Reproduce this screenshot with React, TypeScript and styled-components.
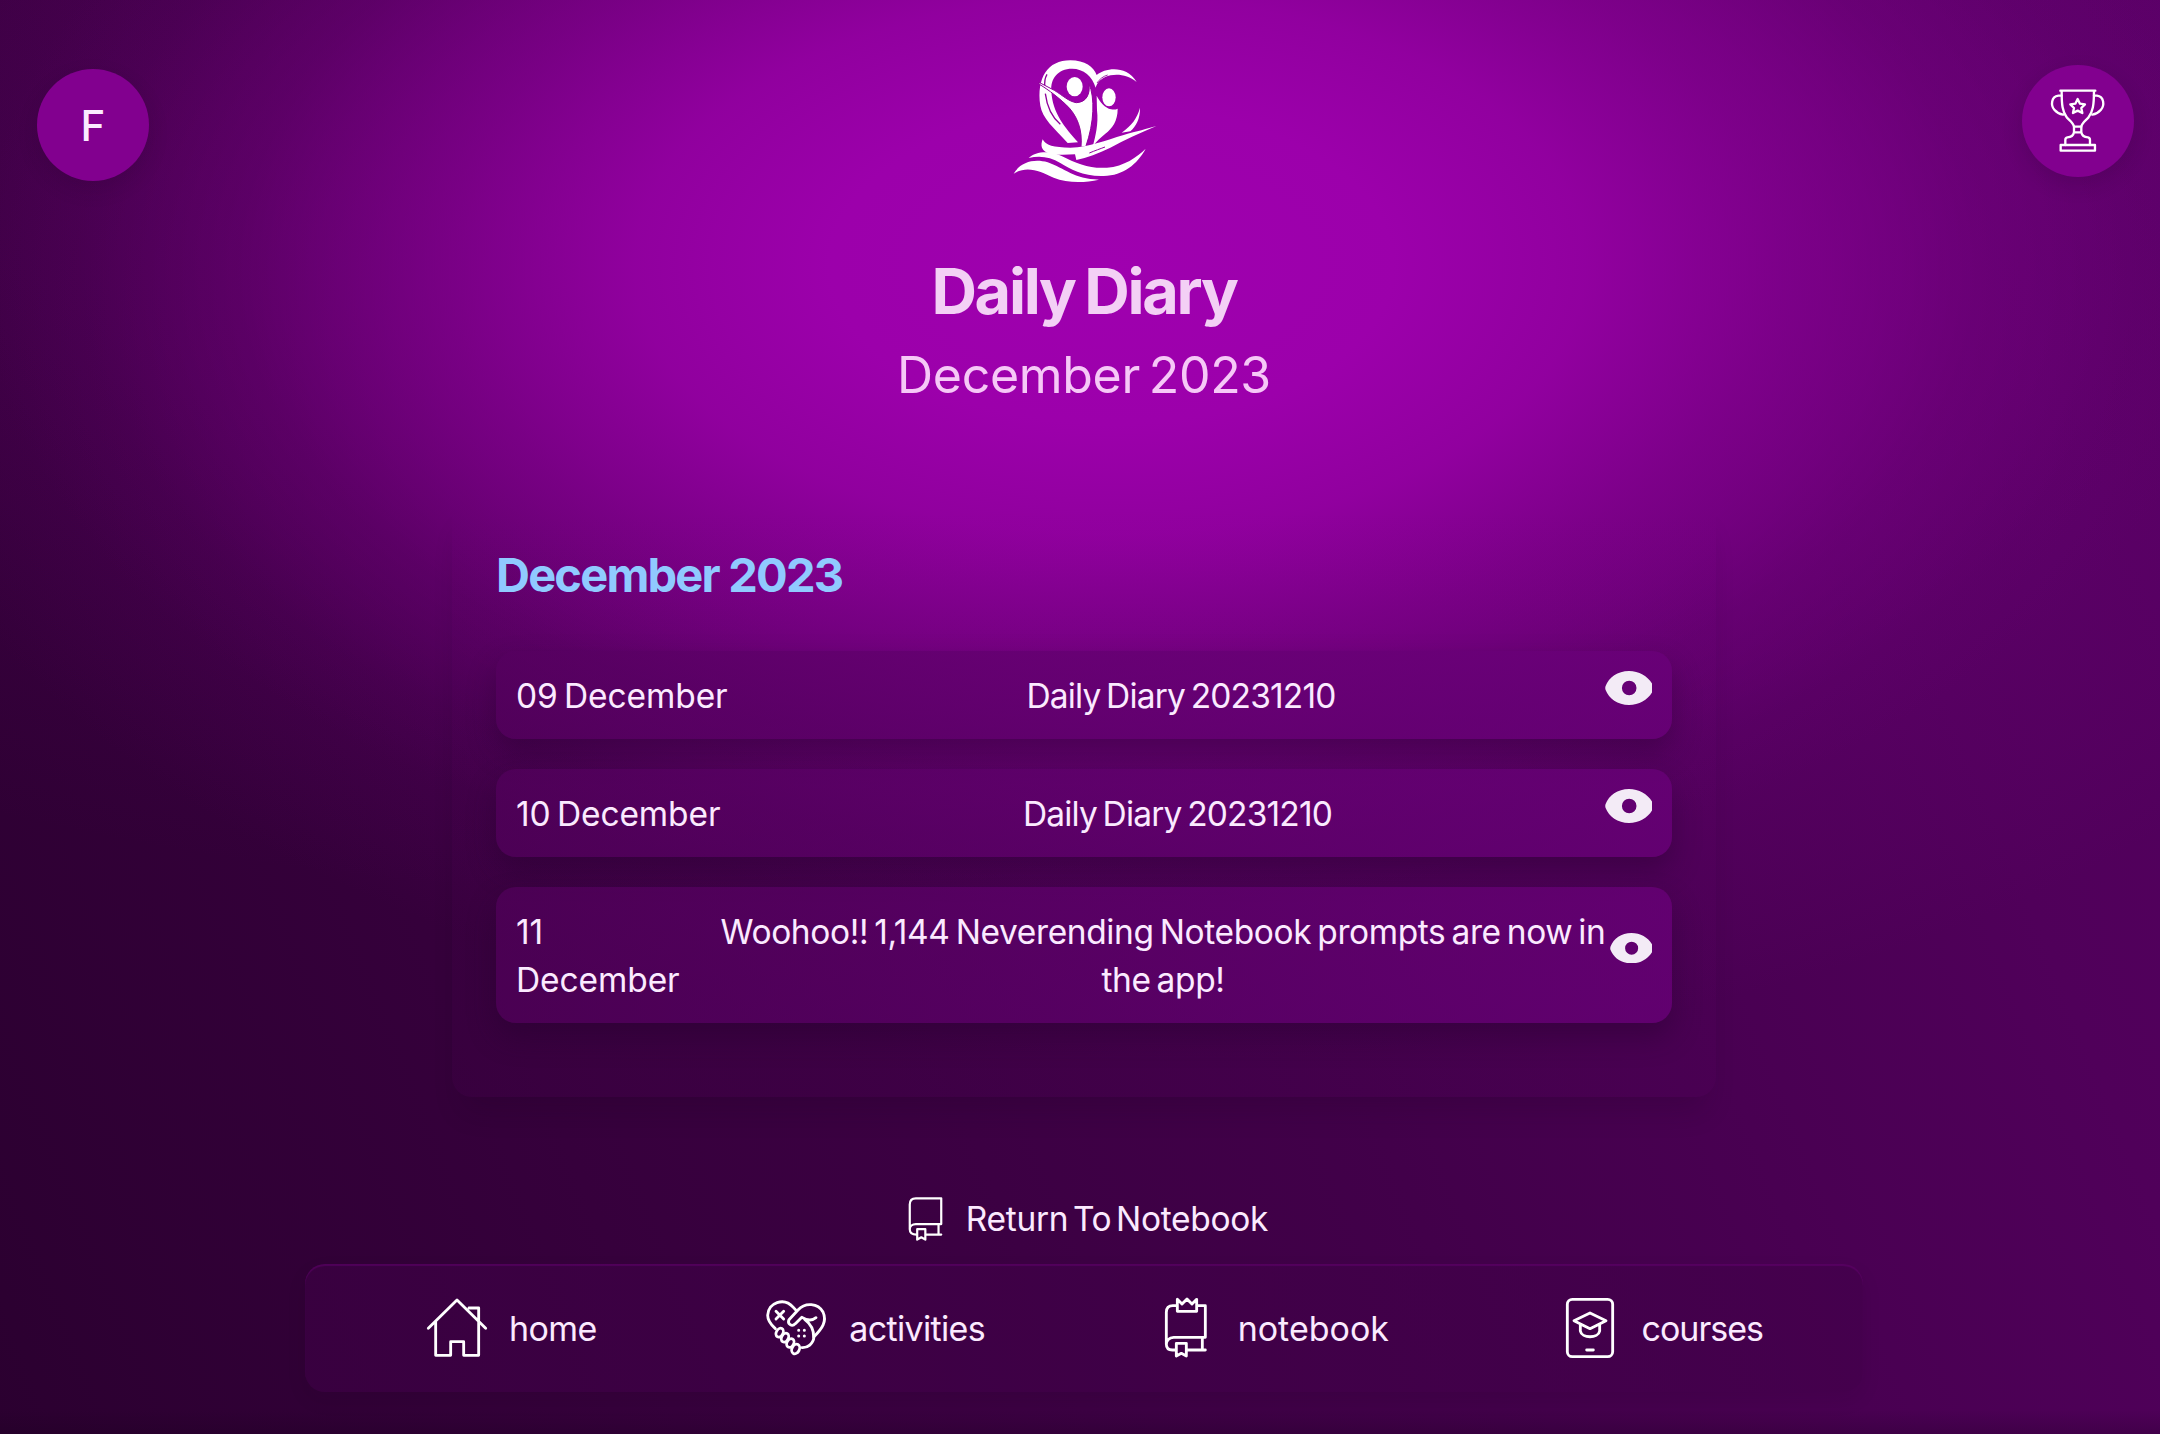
import React from "react";
import styled, { createGlobalStyle } from "styled-components";

const Global = createGlobalStyle`
  *, *::before, *::after { box-sizing: border-box; }
  html, body { margin: 0; padding: 0; background: #2b0030; }
  h1, h2, h3, p, ul { margin: 0; padding: 0; font-weight: inherit; }
  ul { list-style: none; }
  button, a { font: inherit; color: inherit; background: none; border: 0; padding: 0; text-decoration: none; }
`;

const Page = styled.div`
  display: flex;
  flex-direction: column;
  align-items: center;
  width: 2160px;
  height: 1434px;
  padding-left: 8px;
  overflow: hidden;
  font-family: Inter, "Noto Sans", sans-serif;
  color: #fbeaff;
  background:
    linear-gradient(0deg, rgba(20, 0, 24, 0.22) 0, rgba(20, 0, 24, 0) 24px),
    radial-gradient(ellipse 1130px 640px at 1110px 265px,
      #9f00af 0%, rgba(158, 0, 173, 0.97) 25%, rgba(152, 0, 166, 0.88) 42%,
      rgba(140, 0, 153, 0.64) 59%, rgba(124, 0, 136, 0.32) 77%, rgba(108, 0, 120, 0.1) 91%, rgba(100, 0, 112, 0) 100%),
    radial-gradient(ellipse 1350px 760px at 1200px 300px, rgba(124, 0, 140, 0.42) 0%, rgba(124, 0, 140, 0.36) 50%, rgba(120, 0, 134, 0.14) 80%, rgba(120, 0, 134, 0) 100%),
    radial-gradient(ellipse 1700px 900px at 700px 0, rgba(120, 0, 134, 0.2) 0%, rgba(120, 0, 134, 0.14) 50%, rgba(120, 0, 134, 0) 100%),
    linear-gradient(68deg, #2b0030 0%, #36003c 25%, #42004a 55%, #50005a 82%, #560062 100%);
`;

const Header = styled.header`
  display: flex;
  justify-content: space-between;
  align-items: flex-start;
  align-self: stretch;
  height: 183px;
  margin-left: -8px;
  padding: 59px 26px 0 37px;
`;

const RoundButton = styled.button<{ $drop: number }>`
  display: flex;
  align-items: center;
  justify-content: center;
  width: 112px;
  height: 112px;
  margin-top: ${(p) => p.$drop}px;
  border-radius: 50%;
  background: #82008f;
  box-shadow: 0 8px 20px rgba(30, 0, 36, 0.16);
  font-size: 42px;
  font-weight: 500;
`;

const Titles = styled.div`
  display: flex;
  flex-direction: column;
  align-items: center;
  gap: 14px;
  margin-top: 68px;
  white-space: nowrap;
`;

const Title = styled.h1`
  font-size: 63px;
  line-height: 80px;
  font-weight: 700;
  letter-spacing: -2.3px;
  word-spacing: -3px;
  color: #f3d0f5;
`;

const Subtitle = styled.p`
  font-size: 50px;
  line-height: 60px;
  letter-spacing: -0.3px;
  word-spacing: -5px;
  color: #f6c8f7;
`;

const Panel = styled.section`
  width: 1264px;
  margin-top: 94px;
  padding: 44px 44px 74px;
  border-radius: 20px;
  background: linear-gradient(180deg, rgba(80, 0, 90, 0) 0%, rgba(80, 0, 90, 0.12) 100%);
  box-shadow: 0 24px 30px -12px rgba(25, 0, 30, 0.2);
`;

const Month = styled.h2`
  font-size: 47px;
  line-height: 64px;
  font-weight: 700;
  letter-spacing: -1.8px;
  color: #90caff;
`;

const Entries = styled.ul`
  display: flex;
  flex-direction: column;
  gap: 30px;
  margin-top: 44px;
`;

const Entry = styled.li<{ $date: number; $eye: number }>`
  display: grid;
  grid-template-columns: ${(p) => p.$date}px 1fr ${(p) => p.$eye}px;
  padding: 21px 20px 19px;
  border-radius: 20px;
  background: linear-gradient(90deg, rgba(84, 0, 94, 0.64), rgba(106, 0, 122, 0.72));
  box-shadow: 0 14px 28px rgba(35, 0, 42, 0.38);
  font-size: 33.5px;
  line-height: 48px;
`;

const EntryDate = styled.span`
  padding-right: 29px;
  letter-spacing: -0.1px;
  word-spacing: -3px;
`;

const EntryTitle = styled.span<{ $ls: number }>`
  text-align: center;
  letter-spacing: ${(p) => p.$ls}px;
  word-spacing: -3px;
`;

const EyeButton = styled.button<{ $top: number }>`
  display: flex;
  justify-content: flex-end;
  align-items: flex-start;
  margin-top: ${(p) => p.$top}px;
`;

const ReturnLink = styled.a`
  display: flex;
  align-items: center;
  gap: 23px;
  height: 48px;
  margin: 98px 0 0 8px;
  font-size: 33.5px;
  line-height: 48px;
  letter-spacing: -0.3px;
  word-spacing: -4.5px;
  white-space: nowrap;
`;

const Nav = styled.nav`
  display: flex;
  justify-content: space-between;
  align-items: center;
  flex: none;
  width: 1558px;
  height: 128px;
  margin-top: 21px;
  padding: 0 100px 0 122px;
  border-radius: 20px;
  background: linear-gradient(90deg, rgba(62, 0, 70, 0.6), rgba(66, 0, 74, 0.62));
  box-shadow: inset 0 2px 1px rgba(112, 0, 124, 0.4), 0 8px 20px rgba(25, 0, 30, 0.08);
`;

const NavItem = styled.a`
  display: flex;
  align-items: center;
  gap: 22px;
`;

const NavLabel = styled.span<{ $ls: number }>`
  padding-top: 2px;
  font-size: 34px;
  line-height: 48px;
  letter-spacing: ${(p) => p.$ls}px;
  white-space: nowrap;
`;

const Stroke = styled.svg`
  display: block;
  flex: none;
  fill: none;
  stroke: #fff;
  stroke-linecap: round;
  stroke-linejoin: round;
  overflow: visible;
`;

function Logo() {
  return (
    <svg width="146" height="124" viewBox="68 56 438 372" fill="#fff">
      <path d="M150 196C138 112 172 60 240 60C284 60 310 80 319 104C346 82 408 74 439 125C410 100 370 98 345 110C328 118 320 128 316 142C306 108 280 85 245 85C202 85 180 116 183 152C186 218 224 262 263 306L232 308C190 262 156 234 150 196Z" />
      <path d="M170 102C162 116 162 128 164 140M165 160C170 200 184 230 210 252" fill="none" stroke="#8f009a" strokeWidth="4" />
      <path d="M320 128C328 116 338 108 352 104" fill="none" stroke="#8f009a" strokeWidth="2.500" />
      <path d="M146 126L192 150C218 166 236 184 258 187C288 186 300 162 296 130C314 172 312 246 286 320L272 320C277 270 262 225 226 192C204 172 180 152 146 131Z" stroke="#8f009a" strokeWidth="3" />
      <ellipse cx="253" cy="139" rx="24" ry="29" />
      <path d="M319 166C328 185 345 203 362 207C372 209 378 207 382 205C382 242 366 264 345 280C330 292 320 302 308 316C315 290 325 250 320 210Z" />
      <ellipse cx="356" cy="171" rx="20" ry="27" />
      <path d="M449 202C450 236 436 258 420 273L394 277C424 254 440 236 449 202Z" />
      <path d="M157 297C165 315 190 322 240 322C300 320 344 300 400 284C440 272 470 266 498 257C450 277 402 300 360 322C324 340 290 351 258 359L254 342C225 343 190 345 170 337C153 329 150 315 157 297Z" />
      <path d="M297 338C316 330 328 326 344 320" fill="none" stroke="#9300a0" strokeWidth="3" />
      <path d="M115 353C135 333 178 330 212 346C260 370 300 386 350 382C402 378 440 350 466 325C440 372 400 405 340 407C280 409 240 386 210 368C180 350 150 345 115 353Z" />
      <path d="M70 400C90 366 130 354 172 366C224 384 250 416 326 418C280 428 230 428 190 412C150 394 112 374 70 400Z" />
    </svg>
  );
}

function Trophy() {
  return (
    <Stroke width="57.3" height="65.3" viewBox="208 146 172 196" strokeWidth="7">
      <path d="M242 154H347M246 155C246 196 248 218 262 235C273 246 282 252 283 262H305C306 252 315 246 326 235C340 218 343 196 343 155" />
      <path d="M246 169H236C214 172 213 198 224 211C231 219 240 224 250 226M343 169H352C374 172 375 198 364 211C357 219 348 224 338 226" />
      <path d="M283 262V279H305V262M283 279C281 290 273 294 263 294C258 295 257 298 257 302V317M305 279C307 290 315 294 325 294C330 295 331 298 331 302V317" />
      <rect x="243" y="317" width="103" height="17" />
      <path d="M294 179L301 193L316 195L305 206L308 221L294 214L280 221L283 206L272 195L287 193Z" />
    </Stroke>
  );
}

function Eye({ width }: { width: number }) {
  return (
    <svg width={width} height={(width * 34) / 47} viewBox="0 0 47 34" fill="#f3ebf6">
      <path
        fillRule="evenodd"
        d="M0.600 15C4 6.500 12.500 0 24 0C34 0 42.500 5 47 12.500V21.500C42.500 29 34 34 24 34C12.500 34 4 27.500 0.600 19Q-0.100 17 0.600 15ZM24.200 9.700A7.300 7.300 0 1 0 24.200 24.300A7.300 7.300 0 1 0 24.200 9.700Z"
      />
    </svg>
  );
}

function BookIcon() {
  return (
    <Stroke width="35" height="44" viewBox="85 83 103 130" strokeWidth="6.500">
      <path d="M110 194C98 194 90 189 90 178V105C90 93 97 87 108 87H183V163H108C97 163 90 170 90 178M138 194H183M175 163V194" />
      <path d="M112 178H136V209L124 202L112 209Z" />
    </Stroke>
  );
}

function HomeIcon() {
  return (
    <Stroke width="60" height="60" viewBox="21 40 180 180" strokeWidth="8.500">
      <path d="M25 131L111 46L197 131M47 112V212H92V171H131V212H176V112M147 70H176V108" />
    </Stroke>
  );
}

function ActivitiesIcon() {
  return (
    <Stroke width="60" height="60" viewBox="1043 38 180 180" strokeWidth="8.500">
      <path d="M1068 130C1052 116 1045 104 1045 90C1046 52 1094 34 1122 66L1131 76" />
      <path d="M1146 97L1128 115C1118 126 1103 116 1109 103L1136 74C1158 50 1196 53 1211 80C1224 108 1208 130 1184 154C1182 176 1164 188 1148 187" />
      <path d="M1148 96C1164 106 1178 107 1190 97M1156 102C1176 117 1184 136 1183 156" />
      <ellipse cx="1081" cy="142" rx="10" ry="14" transform="rotate(28 1081 142)" />
      <ellipse cx="1097" cy="157" rx="10" ry="14" transform="rotate(28 1097 157)" />
      <ellipse cx="1113" cy="173" rx="10" ry="14" transform="rotate(28 1113 173)" />
      <ellipse cx="1129" cy="191" rx="11" ry="15" transform="rotate(28 1129 191)" />
      <path d="M1070 78L1093 101M1093 78L1070 101" />
      <path d="M1138 135H1138.100M1155 135H1155.100M1138 152H1138.100M1155 152H1155.100" strokeWidth="9" />
    </Stroke>
  );
}

function NotebookIcon() {
  return (
    <Stroke width="60" height="60" viewBox="19 39 180 180" strokeWidth="8.500">
      <path d="M80 62H70C57 62 50 70 50 82V178C50 190 58 195 68 195H78M112 195H167M145 62H167V157H72C58 157 50 167 50 178M158 157V195" />
      <path d="M83 43V79H141V43L127 57L112 42L97 57Z" />
      <path d="M80 175H110V213L95 205L80 213Z" />
    </Stroke>
  );
}

function CoursesIcon() {
  return (
    <Stroke width="60" height="60" viewBox="1227 39 180 180" strokeWidth="8.500">
      <rect x="1249" y="43" width="136" height="172" rx="15" />
      <path d="M1269 107L1317 84L1365 107L1317 131ZM1288 118V138C1292 161 1342 161 1346 138V118M1307 195H1327" />
    </Stroke>
  );
}

const entries = [
  { date: "09 December", title: "Daily Diary 20231210", col: 241, eye: 47, top: -1, ls: -0.82 },
  { date: "10 December", title: "Daily Diary 20231210", col: 234, eye: 47, top: -1, ls: -0.82 },
  {
    date: "11 December",
    title: "Woohoo!! 1,144 Neverending Notebook prompts are now in the app!",
    col: 200,
    eye: 42,
    top: 25,
    ls: -0.38,
  },
];

const links = [
  { label: "home", Icon: HomeIcon, ls: -0.6 },
  { label: "activities", Icon: ActivitiesIcon, ls: -0.65 },
  { label: "notebook", Icon: NotebookIcon, ls: 0 },
  { label: "courses", Icon: CoursesIcon, ls: -1 },
];

export default function App() {
  return (
    <>
      <Global />
      <Page>
        <Header>
          <RoundButton $drop={10}>F</RoundButton>
          <Logo />
          <RoundButton $drop={6}>
            <Trophy />
          </RoundButton>
        </Header>
        <Titles>
          <Title>Daily Diary</Title>
          <Subtitle>December 2023</Subtitle>
        </Titles>
        <Panel>
          <Month>December 2023</Month>
          <Entries>
            {entries.map((e) => (
              <Entry key={e.date} $date={e.col} $eye={e.eye}>
                <EntryDate>{e.date}</EntryDate>
                <EntryTitle $ls={e.ls}>{e.title}</EntryTitle>
                <EyeButton $top={e.top}>
                  <Eye width={e.eye} />
                </EyeButton>
              </Entry>
            ))}
          </Entries>
        </Panel>
        <ReturnLink>
          <BookIcon />
          Return To Notebook
        </ReturnLink>
        <Nav>
          {links.map(({ label, Icon, ls }) => (
            <NavItem key={label}>
              <Icon />
              <NavLabel $ls={ls}>{label}</NavLabel>
            </NavItem>
          ))}
        </Nav>
      </Page>
    </>
  );
}
